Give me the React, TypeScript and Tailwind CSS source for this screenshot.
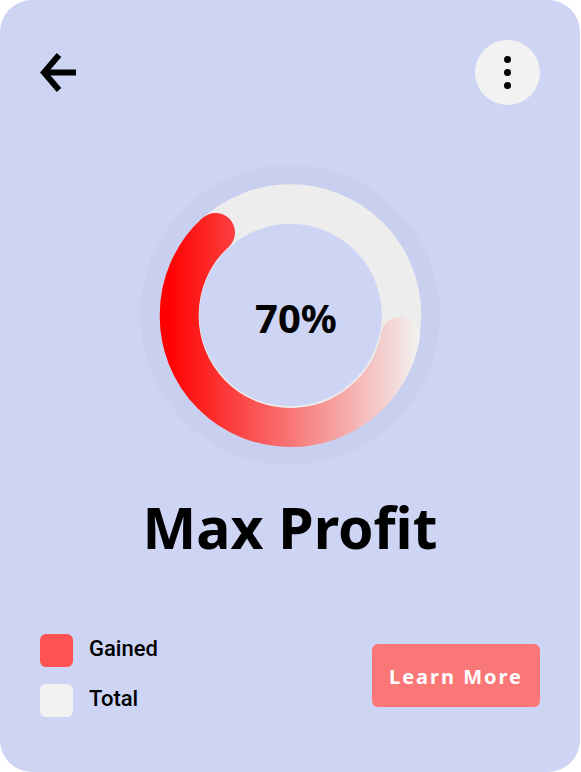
const legend = [
  { label: "Gained", swatch: "bg-[#ff5252]" },
  { label: "Total", swatch: "bg-[#f2f2f2]" },
];

function ProfitRing() {
  return (
    <div className="grid place-items-center">
      <svg viewBox="0 0 300 300" className="col-start-1 row-start-1 size-[300px]" aria-hidden="true">
        <defs>
          <linearGradient id="gained" gradientUnits="userSpaceOnUse" x1="20" y1="0" x2="280" y2="0">
            <stop offset="0.03" stopColor="#ff0000" />
            <stop offset="1" stopColor="#f2f2f2" />
          </linearGradient>
        </defs>
        <circle cx="150" cy="150" r="140" fill="none" stroke="#c9cfee" strokeWidth="20" />
        <circle cx="150.5" cy="150" r="111" fill="none" stroke="#ededed" strokeWidth="39.5" />
        <path
          d="M75.5 67.5A111.5 111.5 0 0 0 39.2 151A111 111.5 0 0 0 150 262.5A111.5 111.5 0 0 0 260.5 171"
          fill="none"
          stroke="url(#gained)"
          strokeWidth="39"
          strokeLinecap="round"
          strokeLinejoin="round"
        />
      </svg>
      <p className="col-start-1 row-start-1 pl-3 pt-1.5 font-['Noto_Sans',sans-serif] text-[40px] leading-none font-bold">
        70%
      </p>
    </div>
  );
}

export default function App() {
  return (
    <main className="mr-px rounded-[32px] bg-[#ced4f4] px-10 pt-10 pb-[55px] font-['Noto_Sans',sans-serif] text-black">
      <header className="flex items-center justify-between">
        <button type="button" aria-label="Back" className="h-10 w-9">
          <svg viewBox="0 0 36 40" className="h-10 w-9" fill="none" stroke="currentColor">
            <path d="M19 2L4 19.5L19 37" strokeWidth="6" />
            <path d="M4 19.5H36" strokeWidth="6" />
          </svg>
        </button>
        <button
          type="button"
          aria-label="More options"
          className="flex size-[65px] flex-col items-center justify-center gap-1.5 rounded-full bg-[#f2f2f2]"
        >
          <span className="size-[7px] rounded-full bg-black" />
          <span className="size-[7px] rounded-full bg-black" />
          <span className="size-[7px] rounded-full bg-black" />
        </button>
      </header>

      <section className="mt-[60px]">
        <ProfitRing />
        <h1 className="mt-[27px] text-center text-[57px] leading-[70px] font-bold">Max Profit</h1>
      </section>

      <footer className="mt-[72px] flex items-center justify-between">
        <ul className="flex flex-col gap-[17px]">
          {legend.map(({ label, swatch }) => (
            <li key={label} className="flex items-center gap-4">
              <span className={`size-[33px] rounded-md ${swatch}`} />
              <span className="pb-1 font-[Roboto,sans-serif] text-[22px] leading-7 font-medium">{label}</span>
            </li>
          ))}
        </ul>
        <button
          type="button"
          className="h-[63px] w-[168px] rounded-md bg-[#f97777] pt-0.5 text-xl font-bold tracking-widest text-white"
        >
          Learn More
        </button>
      </footer>
    </main>
  );
}
